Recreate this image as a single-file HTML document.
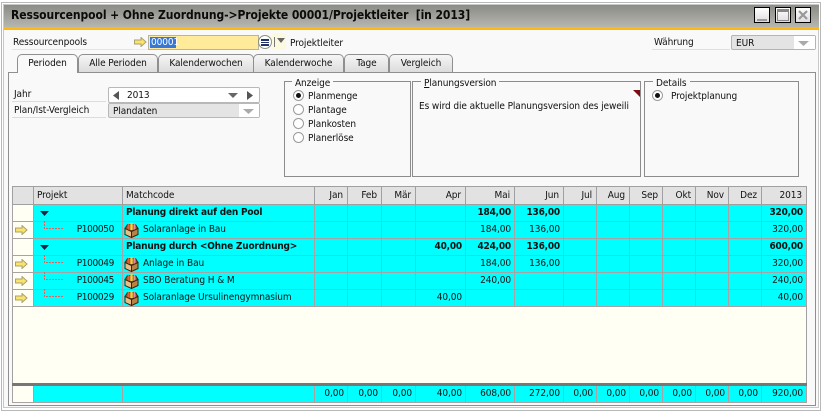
<!DOCTYPE html>
<html><head><meta charset="utf-8">
<style>
html,body{margin:0;padding:0;background:#fff;}
#w{position:relative;width:823px;height:412px;overflow:hidden;background:#fff;font:10px/14px "DejaVu Sans","Liberation Sans",sans-serif;font-stretch:condensed;color:#111;}
#w div,#w svg{position:absolute;}
.t{white-space:nowrap;letter-spacing:-.1px;}
.g{border:1px solid #8c8c8c;box-sizing:border-box;}
.lg{background:#f9f9f9;padding:0 3px;white-space:nowrap;letter-spacing:-.1px;}
.tab{box-sizing:border-box;height:18px;top:54px;border:1px solid #8f8f8f;border-bottom:none;border-radius:5px 5px 0 0;background:linear-gradient(#f6f6f6,#dcdcdc);text-align:center;line-height:17px;letter-spacing:-.1px;white-space:nowrap;}
.r{width:9px;height:9px;border-radius:50%;border:1px solid #9a9a9a;background:#fff;box-sizing:content-box;}
table{border-collapse:collapse;table-layout:fixed;position:absolute;left:12px;top:186px;width:794px;}
td,th{padding:0 3px 0 0;border:1px solid #a8a2a2;text-align:right;font-weight:normal;height:17px;line-height:14px;white-space:nowrap;overflow:hidden;letter-spacing:-.1px;box-sizing:border-box;}
th{background:#e2e2e2;height:18px;border-color:#a0a0a0;padding-right:4px;}
td{background:#0ff;}
td.n{background:#fffff4;}
tr.b td{font-weight:bold;letter-spacing:-.2px;}
td.l,th.l{text-align:left;padding-left:3px;}
td.p{padding-right:8px;letter-spacing:-.35px;}
td.i{text-align:left;padding-left:20px;}
</style></head><body>
<svg width="0" height="0" style="position:absolute;left:0;top:0"><defs><symbol id="box" viewBox="0 0 15 16"><path d="M1 6.500L3.500 2.500H11.500L14 6.500L7.500 9.500Z" fill="#8a5a28" stroke="#3a2410"/><path d="M4.500 8V2" stroke="#e8603a" stroke-width="2"/><path d="M10.500 8V2" stroke="#e88aa0" stroke-width="2"/><path d="M7.500 8V1" stroke="#f4d040" stroke-width="2.400"/><path d="M1 6.500L7.500 9.500V15.500L1 12.500Z" fill="#e6bf86" stroke="#3a2410"/><path d="M7.500 9.500L14 6.500V12.500L7.500 15.500Z" fill="#b98244" stroke="#3a2410"/></symbol><symbol id="arr" viewBox="0 0 13 10"><path d="M.5 3H7V.5L12 5 7 9.500V7H.5Z" fill="#fbe36a" stroke="#a8a070"/></symbol></defs></svg>
<div id="w">
<!-- window frame -->
<div style="left:1px;top:2px;width:820px;height:409px;border:1px solid #b8b8b8;box-sizing:border-box;background:#fff"></div>
<div style="left:3px;top:4px;width:816px;height:404px;background:#f9f9f9;border:1px solid #c8c8c8;box-sizing:border-box"></div>
<div style="left:4px;top:5px;width:815px;height:22px;background:linear-gradient(#8c8c86,#b6b6b0)"></div>
<div style="left:4px;top:27px;width:815px;height:3px;background:#fdb913"></div>
<div class="t" style="left:11px;top:8px;font-weight:bold;font-size:12px;letter-spacing:-.08px;color:#0b0b0b">Ressourcenpool + Ohne Zuordnung-&gt;Projekte 00001/Projektleiter&nbsp; [in 2013]</div>
<!-- window buttons -->
<div style="left:754px;top:7px;width:16px;height:16px;border:1px solid #000;background:linear-gradient(#fff,#ddd);box-sizing:border-box"><div style="left:2px;top:11px;width:10px;height:2px;background:#9a9a9a"></div></div>
<div style="left:775px;top:7px;width:16px;height:16px;border:1px solid #000;background:linear-gradient(#fff,#ddd);box-sizing:border-box"><div style="left:1px;top:1px;width:12px;height:12px;border:1px solid #888;border-top-width:3px;box-sizing:border-box"></div></div>
<div style="left:795px;top:7px;width:16px;height:16px;border:1px solid #000;background:linear-gradient(#fff,#ddd);box-sizing:border-box"><svg style="left:2px;top:2px" width="10" height="10"><path d="M1 1L9 9M9 1L1 9" stroke="#999" stroke-width="2.200"/></svg></div>

<!-- top row -->
<div class="t" style="left:13px;top:36px">Ressourcenpools</div>
<div style="left:12px;top:49px;width:120px;height:1px;background:#e4e4e4"></div>
<svg style="left:134px;top:37px" width="13" height="10"><use href="#arr"/></svg>
<div style="left:132px;top:49px;width:128px;height:1px;background:#fdeeb0"></div>
<div style="left:148px;top:35px;width:111px;height:15px;background:#ffeb99;border:1px solid #b5b5a0;box-sizing:border-box"></div>
<div style="left:150px;top:37px;width:26px;height:11px;background:#3678d8"></div>
<div class="t" style="left:151px;top:36px;color:#fff">00001</div>
<div style="left:258px;top:35px;width:14px;height:14px;border-radius:50%;background:#fff;border:1px solid #8f8f80;box-sizing:border-box"></div>
<div style="left:261px;top:39px;width:8px;height:1.5px;background:#223366"></div>
<div style="left:261px;top:41.500px;width:8px;height:1.5px;background:#223366"></div>
<div style="left:261px;top:44px;width:8px;height:1.5px;background:#223366"></div>
<div style="left:272px;top:33px;width:14px;height:17px;background:#fdf8e0"></div>
<div style="left:274px;top:37px;width:1px;height:10px;background:#777"></div>
<svg style="left:277px;top:38px" width="8" height="5"><path d="M0 0H8L4 5Z" fill="#666"/></svg>
<div class="t" style="left:290px;top:37px">Projektleiter</div>
<div class="t" style="left:654px;top:36px">Währung</div>
<div style="left:652px;top:49px;width:78px;height:1px;background:#e0e0e0"></div>
<div style="left:731px;top:35px;width:85px;height:15px;background:#e4e4e4;border:1px solid #b4b4b4;border-radius:2px;box-sizing:border-box"></div>
<div class="t" style="left:736px;top:37px">EUR</div>
<div style="left:794px;top:36px;width:21px;height:13px;background:#fff"></div>
<svg style="left:798px;top:41px" width="11" height="5"><path d="M0 0H11L5.500 5Z" fill="#aaa"/></svg>

<!-- pane -->
<div style="left:8px;top:72px;width:808px;height:334px;border:1px solid #8f8f8f;box-sizing:border-box;background:#f9f9f9"></div>
<div class="tab" style="left:78px;width:80px">Alle Perioden</div>
<div class="tab" style="left:158px;width:96px">Kalenderwochen</div>
<div class="tab" style="left:253px;width:91px">Kalenderwoche</div>
<div class="tab" style="left:344px;width:45px">Tage</div>
<div class="tab" style="left:389px;width:64px">Vergleich</div>
<div class="tab" style="left:17px;width:61px;height:19px;background:#f9f9f9;z-index:2">Perioden</div>

<!-- Jahr -->
<div class="t" style="left:14px;top:88px">Jahr</div>
<div style="left:12px;top:101px;width:94px;height:1px;background:#dcdcdc"></div>
<div style="left:108px;top:87px;width:152px;height:16px;background:#fff;border:1px solid #b8b8b8;border-radius:2px;box-sizing:border-box"></div>
<svg style="left:113px;top:91px" width="6" height="9"><path d="M6 0V9L0 4.500Z" fill="#555"/></svg>
<div class="t" style="left:127px;top:89px">2013</div>
<svg style="left:228px;top:93px" width="10" height="5"><path d="M0 0H10L5 5Z" fill="#666"/></svg>
<svg style="left:247px;top:91px" width="6" height="9"><path d="M0 0V9L6 4.500Z" fill="#555"/></svg>
<div class="t" style="left:14px;top:104px">Plan/Ist-Vergleich</div>
<div style="left:12px;top:117px;width:94px;height:1px;background:#dcdcdc"></div>
<div style="left:108px;top:103px;width:152px;height:15px;background:#e4e4e4;border:1px solid #b8b8b8;border-radius:2px;box-sizing:border-box"></div>
<div class="t" style="left:113px;top:105px">Plandaten</div>
<div style="left:239px;top:104px;width:20px;height:13px;background:#fff"></div>
<svg style="left:243px;top:109px" width="11" height="5"><path d="M0 0H11L5.500 5Z" fill="#aaa"/></svg>

<!-- groups -->
<div class="g" style="left:284px;top:81px;width:127px;height:96px"></div>
<div class="lg" style="left:292px;top:77px">Anzeige</div>
<div class="r" style="left:293px;top:90px"></div><div style="left:296px;top:93px;width:5px;height:5px;border-radius:50%;background:#111"></div>
<div class="t" style="left:308px;top:90px">Planmenge</div>
<div class="r" style="left:293px;top:104px"></div><div class="t" style="left:308px;top:104px">Plantage</div>
<div class="r" style="left:293px;top:118px"></div><div class="t" style="left:308px;top:118px">Plankosten</div>
<div class="r" style="left:293px;top:132px"></div><div class="t" style="left:308px;top:132px">Planerlöse</div>

<div class="g" style="left:412px;top:81px;width:229px;height:96px"></div>
<div class="lg" style="left:421px;top:77px"><u>P</u>lanungsversion</div>
<div class="t" style="left:419px;top:100px">Es wird die aktuelle Planungsversion des jeweili</div>
<svg style="left:633px;top:90px" width="7" height="7"><path d="M0 0H7V7Z" fill="#7a0c14"/></svg>

<div class="g" style="left:644px;top:81px;width:155px;height:96px"></div>
<div class="lg" style="left:653px;top:77px">Details</div>
<div class="r" style="left:652px;top:90px"></div><div style="left:655px;top:93px;width:5px;height:5px;border-radius:50%;background:#111"></div>
<div class="t" style="left:671px;top:90px">Projektplanung</div>

<!-- grid bg -->
<div style="left:12px;top:186px;width:795px;height:216px;background:#fffff4;border:1px solid #a0a0a0;box-sizing:border-box"></div>
<table>
<colgroup><col style="width:21px"><col style="width:89px"><col style="width:192px"><col style="width:33px"><col style="width:34px"><col style="width:34px"><col style="width:50px"><col style="width:49px"><col style="width:49px"><col style="width:33px"><col style="width:33px"><col style="width:33px"><col style="width:33px"><col style="width:33px"><col style="width:33px"><col style="width:45px"></colgroup>
<tr><th></th><th class="l">Projekt</th><th class="l">Matchcode</th><th>Jan</th><th>Feb</th><th>Mär</th><th>Apr</th><th>Mai</th><th>Jun</th><th>Jul</th><th>Aug</th><th>Sep</th><th>Okt</th><th>Nov</th><th>Dez</th><th>2013</th></tr>
<tr class="b"><td class="n"></td><td></td><td class="l">Planung direkt auf den Pool</td><td></td><td></td><td></td><td></td><td>184,00</td><td>136,00</td><td></td><td></td><td></td><td></td><td></td><td></td><td>320,00</td></tr>
<tr><td class="n"></td><td class="p">P100050</td><td class="i">Solaranlage in Bau</td><td></td><td></td><td></td><td></td><td>184,00</td><td>136,00</td><td></td><td></td><td></td><td></td><td></td><td></td><td>320,00</td></tr>
<tr class="b"><td class="n"></td><td></td><td class="l">Planung durch &lt;Ohne Zuordnung&gt;</td><td></td><td></td><td></td><td>40,00</td><td>424,00</td><td>136,00</td><td></td><td></td><td></td><td></td><td></td><td></td><td>600,00</td></tr>
<tr><td class="n"></td><td class="p">P100049</td><td class="i">Anlage in Bau</td><td></td><td></td><td></td><td></td><td>184,00</td><td>136,00</td><td></td><td></td><td></td><td></td><td></td><td></td><td>320,00</td></tr>
<tr><td class="n"></td><td class="p">P100045</td><td class="i">SBO Beratung H &amp; M</td><td></td><td></td><td></td><td></td><td>240,00</td><td></td><td></td><td></td><td></td><td></td><td></td><td></td><td>240,00</td></tr>
<tr><td class="n"></td><td class="p">P100029</td><td class="i">Solaranlage Ursulinengymnasium</td><td></td><td></td><td></td><td>40,00</td><td></td><td></td><td></td><td></td><td></td><td></td><td></td><td></td><td>40,00</td></tr>
</table>
<table style="top:385px">
<colgroup><col style="width:21px"><col style="width:89px"><col style="width:192px"><col style="width:33px"><col style="width:34px"><col style="width:34px"><col style="width:50px"><col style="width:49px"><col style="width:49px"><col style="width:33px"><col style="width:33px"><col style="width:33px"><col style="width:33px"><col style="width:33px"><col style="width:33px"><col style="width:45px"></colgroup>
<tr><td class="n" style="height:16px"></td><td></td><td></td><td>0,00</td><td>0,00</td><td>0,00</td><td>40,00</td><td>608,00</td><td>272,00</td><td>0,00</td><td>0,00</td><td>0,00</td><td>0,00</td><td>0,00</td><td>0,00</td><td>920,00</td></tr>
</table>
<div style="left:12px;top:383px;width:795px;height:3px;background:#777"></div>

<!-- tree marks -->
<svg style="left:40px;top:211px" width="9" height="5"><path d="M0 0H9L4.500 5Z" fill="#224"/></svg>
<svg style="left:40px;top:245px" width="9" height="5"><path d="M0 0H9L4.500 5Z" fill="#224"/></svg>
<svg style="left:44px;top:221px" width="20" height="9"><path d="M.5 0V7.500H19" stroke="#d86860" stroke-dasharray="2 1" fill="none"/></svg>
<svg style="left:44px;top:255px" width="20" height="9"><path d="M.5 0V7.500H19" stroke="#d86860" stroke-dasharray="2 1" fill="none"/></svg>
<svg style="left:44px;top:272px" width="20" height="9"><path d="M.5 0V7.500H19" stroke="#d86860" stroke-dasharray="2 1" fill="none"/></svg>
<svg style="left:44px;top:289px" width="20" height="9"><path d="M.5 0V7.500H19" stroke="#d86860" stroke-dasharray="2 1" fill="none"/></svg>

<!-- row arrows -->
<svg style="left:15px;top:225px" width="13" height="10"><use href="#arr"/></svg>
<svg style="left:15px;top:259px" width="13" height="10"><use href="#arr"/></svg>
<svg style="left:15px;top:276px" width="13" height="10"><use href="#arr"/></svg>
<svg style="left:15px;top:293px" width="13" height="10"><use href="#arr"/></svg>

<!-- box icons -->
<svg style="left:124px;top:222px" width="15" height="16"><use href="#box"/></svg>
<svg style="left:124px;top:256px" width="15" height="16"><use href="#box"/></svg>
<svg style="left:124px;top:273px" width="15" height="16"><use href="#box"/></svg>
<svg style="left:124px;top:290px" width="15" height="16"><use href="#box"/></svg>
</div>
</body></html>
